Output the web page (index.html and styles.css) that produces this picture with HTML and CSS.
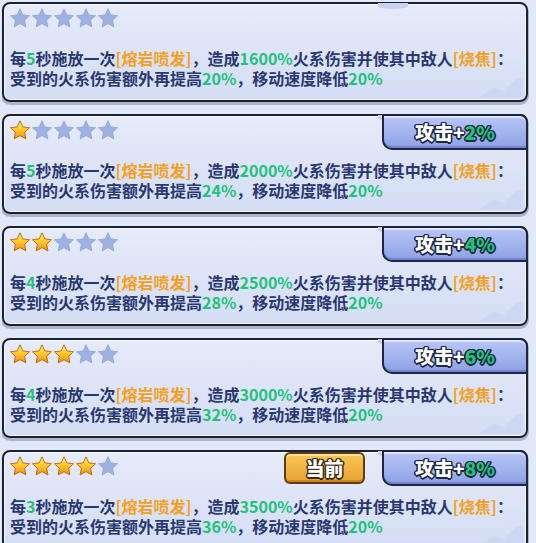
FILE: index.html
```html
<!DOCTYPE html>
<html lang="zh-CN">
<head>
  <meta charset="UTF-8" />
  <meta name="viewport" content="width=device-width, initial-scale=1.0" />
  <title>熔岩喷发</title>
  <link rel="stylesheet" href="styles.css">
</head>
<body>

<svg class="defs" width="0" height="0">
  <defs>
    <linearGradient id="gold" x1="0" y1="0" x2="0" y2="1">
      <stop offset="0" stop-color="#fff07a" />
      <stop offset="0.5" stop-color="#ffc928" />
      <stop offset="1" stop-color="#ee8a12" />
    </linearGradient>
    <symbol id="star" viewBox="0 0 20 20">
      <polygon points="10,0.8 12.82,6.92 19.51,7.71 14.57,12.28 15.88,18.89 10,15.6 4.12,18.89 5.43,12.28 0.49,7.71 7.18,6.92" />
    </symbol>
  </defs>
</svg>

<main class="list">

  <section class="card">
    <div class="head">
      <div class="stars">
        <svg class="star"><use href="#star" /></svg>
        <svg class="star"><use href="#star" /></svg>
        <svg class="star"><use href="#star" /></svg>
        <svg class="star"><use href="#star" /></svg>
        <svg class="star"><use href="#star" /></svg>
      </div>
    </div>
    <p class="desc">每<b class="g">5</b>秒施放一次<b class="o">[熔岩喷发]</b>，造成<b class="g">1600%</b>火系伤害并使其中敌人<b class="o">[烧焦]</b>：<br>受到的火系伤害额外再提高<b class="g">20%</b>，移动速度降低<b class="g">20%</b></p>
  </section>

  <section class="card">
    <div class="head">
      <div class="stars">
        <svg class="star on"><use href="#star" /></svg>
        <svg class="star"><use href="#star" /></svg>
        <svg class="star"><use href="#star" /></svg>
        <svg class="star"><use href="#star" /></svg>
        <svg class="star"><use href="#star" /></svg>
      </div>
      <div class="badge">攻击+<span class="g">2%</span></div>
    </div>
    <p class="desc">每<b class="g">5</b>秒施放一次<b class="o">[熔岩喷发]</b>，造成<b class="g">2000%</b>火系伤害并使其中敌人<b class="o">[烧焦]</b>：<br>受到的火系伤害额外再提高<b class="g">24%</b>，移动速度降低<b class="g">20%</b></p>
  </section>

  <section class="card">
    <div class="head">
      <div class="stars">
        <svg class="star on"><use href="#star" /></svg>
        <svg class="star on"><use href="#star" /></svg>
        <svg class="star"><use href="#star" /></svg>
        <svg class="star"><use href="#star" /></svg>
        <svg class="star"><use href="#star" /></svg>
      </div>
      <div class="badge">攻击+<span class="g">4%</span></div>
    </div>
    <p class="desc">每<b class="g">4</b>秒施放一次<b class="o">[熔岩喷发]</b>，造成<b class="g">2500%</b>火系伤害并使其中敌人<b class="o">[烧焦]</b>：<br>受到的火系伤害额外再提高<b class="g">28%</b>，移动速度降低<b class="g">20%</b></p>
  </section>

  <section class="card">
    <div class="head">
      <div class="stars">
        <svg class="star on"><use href="#star" /></svg>
        <svg class="star on"><use href="#star" /></svg>
        <svg class="star on"><use href="#star" /></svg>
        <svg class="star"><use href="#star" /></svg>
        <svg class="star"><use href="#star" /></svg>
      </div>
      <div class="badge">攻击+<span class="g">6%</span></div>
    </div>
    <p class="desc">每<b class="g">4</b>秒施放一次<b class="o">[熔岩喷发]</b>，造成<b class="g">3000%</b>火系伤害并使其中敌人<b class="o">[烧焦]</b>：<br>受到的火系伤害额外再提高<b class="g">32%</b>，移动速度降低<b class="g">20%</b></p>
  </section>

  <section class="card">
    <div class="head">
      <div class="stars">
        <svg class="star on"><use href="#star" /></svg>
        <svg class="star on"><use href="#star" /></svg>
        <svg class="star on"><use href="#star" /></svg>
        <svg class="star on"><use href="#star" /></svg>
        <svg class="star"><use href="#star" /></svg>
      </div>
      <div class="current">当前</div>
      <div class="badge">攻击+<span class="g">8%</span></div>
    </div>
    <p class="desc">每<b class="g">3</b>秒施放一次<b class="o">[熔岩喷发]</b>，造成<b class="g">3500%</b>火系伤害并使其中敌人<b class="o">[烧焦]</b>：<br>受到的火系伤害额外再提高<b class="g">36%</b>，移动速度降低<b class="g">20%</b></p>
  </section>

</main>
</body>
</html>
```

FILE: styles.css
```css
body {
  margin: 2px 0 0 2px;
  background-color: #e1e8f7;
  font-family: "Noto Sans CJK SC", "Noto Sans", sans-serif;
  overflow: hidden;
}
.defs {position: absolute;}
.list {
  display: flex;
  flex-direction: column;
  gap: 12px;
  width: 526px;
}
.card {
  position: relative;
  box-sizing: border-box;
  height: 100px;
  border: 2px solid #1c2236;
  border-radius: 8px;
  background: linear-gradient(#e6ebfa, #d4ddf4);
  box-shadow: inset 0 0 0 1px rgba(255, 255, 255, 0.7), 0 2px 0 1px #aab4cb;
}
/* cloud notch on top edge */
.card::before {
  content: "";
  position: absolute;
  top: -1px;
  left: 374px;
  width: 30px;
  height: 6px;
  border-radius: 0 0 50% 50%;
  background-color: #c8d2ee;
}
/* little mountain in the bottom right corner */
.card::after {
  content: "";
  position: absolute;
  right: 3px;
  bottom: 3px;
  width: 44px;
  height: 20px;
  background-color: #cdd7f2;
  clip-path: polygon(0 100%, 35% 55%, 55% 70%, 85% 10%, 100% 0, 100% 100%);
}
.head {
  display: flex;
  align-items: flex-start;
  height: 34px;
}
.stars {
  display: flex;
  gap: 2px;
  margin: 4px 0 0 6px;
}
.star {
  width: 20px;
  height: 20px;
  fill: #9eb1e3;
  stroke: #8fa3d9;
  stroke-width: 0.8;
  stroke-linejoin: round;
}
.star.on {
  fill: url(#gold);
  stroke: #c06d12;
  stroke-width: 1;
}
.badge {
  position: relative;
  z-index: 1;
  box-sizing: border-box;
  width: 146px;
  height: 36px;
  margin: -2px -2px 0 auto;
  border: 2px solid #1f2740;
  border-radius: 0 8px 0 10px;
  background: linear-gradient(#b7c6f6, #8da2e4);
  box-shadow: inset 0 2px 0 rgba(255, 255, 255, 0.55), inset 0 -2px 0 #7086d2;
  color: #fff;
  font-size: 19px;
  font-weight: 900;
  line-height: 32px;
  text-align: center;
  text-shadow: 1.5px 0 0 #1e2640, -1.5px 0 0 #1e2640, 0 1.5px 0 #1e2640, 0 -1.5px 0 #1e2640,
    1px 1px 0 #1e2640, -1px -1px 0 #1e2640, 1px -1px 0 #1e2640, -1px 1px 0 #1e2640;
}
.current {
  box-sizing: border-box;
  width: 81px;
  height: 32px;
  margin: 0 17px 0 auto;
  border: 2px solid #5a3d12;
  border-radius: 6px;
  background: linear-gradient(#f9c653, #e9a232);
  box-shadow: inset 0 2px 0 rgba(255, 255, 255, 0.45), inset 0 -2px 0 #cc8420;
  color: #fff;
  font-size: 19px;
  font-weight: 900;
  line-height: 28px;
  text-align: center;
  text-shadow: 1.5px 0 0 #3a2a10, -1.5px 0 0 #3a2a10, 0 1.5px 0 #3a2a10, 0 -1.5px 0 #3a2a10,
    1px 1px 0 #3a2a10, -1px -1px 0 #3a2a10, 1px -1px 0 #3a2a10, -1px 1px 0 #3a2a10;
}
.current + .badge {margin-left: 0;}
.g {color: #22c27a;}
.o {color: #f4a01e;}
.desc {
  position: relative;
  z-index: 1;
  margin: 10px 0 0 6px;
  color: #2a3870;
  font-size: 16px;
  font-weight: 700;
  line-height: 20px;
  white-space: nowrap;
}
.desc b {font-weight: 700;}
```
